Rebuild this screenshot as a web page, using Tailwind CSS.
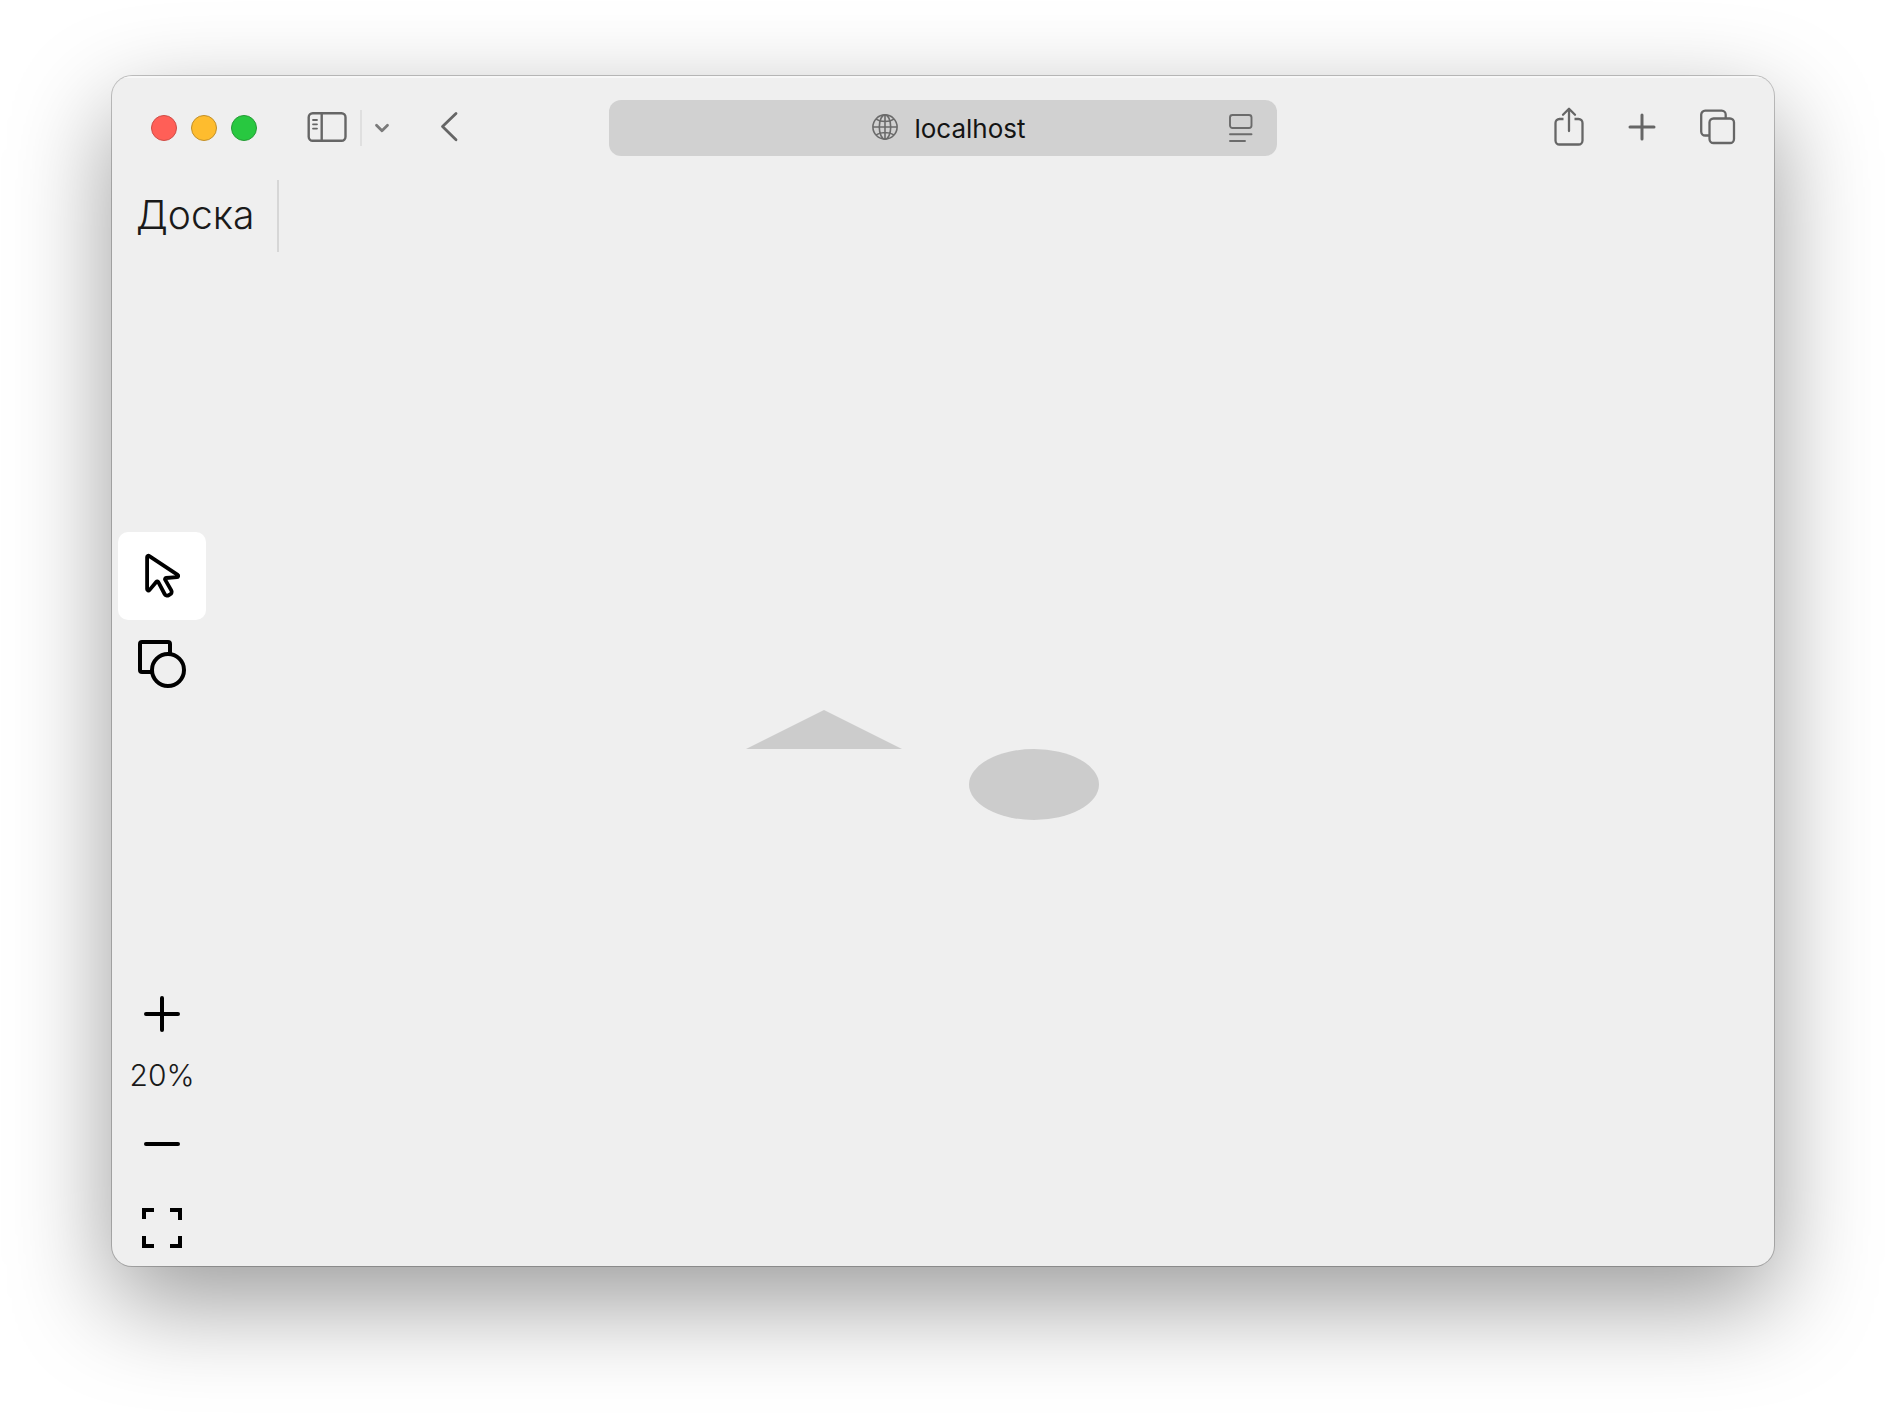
<!DOCTYPE html>
<html lang="ru">
<head>
<meta charset="utf-8">
<title>Доска</title>
<script src="https://cdn.jsdelivr.net/npm/@tailwindcss/browser@4"></script>
</head>
<body class="flex min-h-screen flex-col bg-white px-28 pt-19 pb-37 font-['Inter',sans-serif] text-[#1a1a1a]">
<div class="flex flex-1 flex-col overflow-hidden rounded-[20px] bg-[#efefef] shadow-[0_0_0_1px_rgba(0,0,0,0.22),0_36px_100px_rgba(0,0,0,0.4)]">

  <!-- Browser toolbar -->
  <header class="grid h-26 shrink-0 grid-cols-[1fr_668px_1fr] items-center border-t-2 border-[#f7f7f7] pb-[2px] text-[#666]">
    <div class="flex items-center pl-[39px]">
      <div class="flex gap-[14px]">
        <button aria-label="Закрыть" class="size-[26px] rounded-full border border-[#cf4b45] bg-[#ff5f57]"></button>
        <button aria-label="Свернуть" class="size-[26px] rounded-full border border-[#c28f27] bg-[#febc2e]"></button>
        <button aria-label="Развернуть" class="size-[26px] rounded-full border border-[#249a34] bg-[#28c840]"></button>
      </div>
      <button aria-label="Боковая панель" class="mb-[2px] ml-[50px]">
        <svg class="block" width="40" height="32" viewBox="0 0 40 32" fill="none" stroke="currentColor" stroke-width="2.4" stroke-linecap="round"><rect x="1.7" y="2.2" width="36.8" height="27.6" rx="4"/><path d="M14.7 2.2v27.6"/><path d="M6 9h4M6 13.3h4M6 17.6h4" stroke-width="1.8"/></svg>
      </button>
      <span class="ml-[13px] h-9 w-[2px] bg-[#dfdfdf]"></span>
      <button aria-label="Группы вкладок" class="ml-3">
        <svg class="block" width="16" height="12" viewBox="0 0 16 12" fill="none" stroke="#7b7b7b" stroke-width="2.8" stroke-linecap="round" stroke-linejoin="round"><path d="M2.5 3.2 8 8.8l5.500-5.600"/></svg>
      </button>
      <button aria-label="Назад" class="mb-[2px] ml-[50px]">
        <svg class="block" width="18" height="32" viewBox="0 0 18 32" fill="none" stroke="currentColor" stroke-width="2.8" stroke-linecap="round" stroke-linejoin="round"><path d="M16 2.500 2.500 15.600 16 28.700"/></svg>
      </button>
    </div>

    <div class="relative flex h-14 items-center justify-center rounded-xl bg-[#d1d1d1]">
      <a href="#" class="flex items-center gap-4 pl-3">
        <svg class="mb-[2px] block" width="26" height="26" viewBox="0 0 26 26" fill="none" stroke="#6b6b6b" stroke-width="1.6"><circle cx="13" cy="13" r="12.100"/><ellipse cx="13" cy="13" rx="5.700" ry="12.100"/><path d="M13 1v24M1 13h24M4 5.100c5 3.200 13 3.200 18 0M4 20.900c5-3.200 13-3.200 18 0"/></svg>
        <span class="pt-[2px] text-[26px] leading-8 text-[#141414]">localhost</span>
      </a>
      <button aria-label="Режим чтения" class="absolute right-6">
        <svg class="block" width="24" height="30" viewBox="0 0 24 30" fill="none" stroke="#6b6b6b" stroke-width="1.900" stroke-linecap="round"><rect x="1" y="2" width="21.500" height="13" rx="2.500"/><path d="M1 21.300h21.500M1 28h15"/></svg>
      </button>
    </div>

    <div class="flex items-center justify-end pr-[38px]">
      <button aria-label="Поделиться">
        <svg class="mb-1 block" width="30" height="40" viewBox="0 0 30 40" fill="none" stroke="currentColor" stroke-width="2.300" stroke-linecap="round" stroke-linejoin="round"><path d="M9.500 13H5.500a4 4 0 0 0-4 4v17.500a4 4 0 0 0 4 4h19a4 4 0 0 0 4-4V17a4 4 0 0 0-4-4h-4" stroke-linecap="butt"/><path d="M15 25V3M9 8.700l6-6 6 6"/></svg>
      </button>
      <button aria-label="Новая вкладка" class="ml-11">
        <svg class="mb-[3px] block" width="28" height="28" viewBox="0 0 28 28" stroke="currentColor" stroke-width="3" stroke-linecap="round"><path d="M14 2v24M2 14h24"/></svg>
      </button>
      <button aria-label="Обзор вкладок" class="ml-11">
        <svg class="mb-[3px] block" width="36" height="36" viewBox="0 0 36 36" fill="none" stroke="currentColor" stroke-width="2.300"><rect x="9.500" y="9.500" width="24.500" height="24.500" rx="4"/><path d="M9.500 26.500H5.200a4 4 0 0 1-4-4V5.700a4 4 0 0 1 4-4h16.500a4 4 0 0 1 4 4v3.800"/></svg>
      </button>
    </div>
  </header>

  <!-- Board title -->
  <div class="flex h-18 shrink-0">
    <h1 class="flex w-[167px] items-center border-r-2 border-[#d6d6d6] pb-1 pl-6 text-[39px] leading-none font-light">Доска</h1>
  </div>

  <div class="flex flex-1">
    <!-- Tools -->
    <nav aria-label="Инструменты" class="flex w-[100px] flex-col items-center pt-70 text-black">
      <button aria-label="Выбор" class="grid size-22 place-items-center rounded-[10px] bg-white">
        <svg class="block" width="48" height="48" viewBox="0 0 48 48" fill="none" stroke="currentColor" stroke-width="3.800" stroke-linecap="round" stroke-linejoin="round"><path d="M9.100 4.900v32.400a1.300 1.300 0 0 0 2.300.8l7-8.400a1.100 1.100 0 0 1 1.800.2l6.400 12.100a3 3 0 0 0 4 1.200l1.500-.8a3 3 0 0 0 1.200-4.100l-6.200-10.700a1.100 1.100 0 0 1 .9-1.600l11.100-.9a1.200 1.200 0 0 0 .6-2.200L11 3.900a1.200 1.200 0 0 0-1.900 1z"/></svg>
      </button>
      <button aria-label="Фигуры" class="grid size-22 place-items-center">
        <svg class="block" width="48" height="48" viewBox="0 0 48 48" fill="none" stroke="currentColor" stroke-width="4"><path d="M32 13V4a2 2 0 0 0-2-2H4a2 2 0 0 0-2 2v26a2 2 0 0 0 2 2h9"/><circle cx="30" cy="30" r="16"/></svg>
      </button>
      <button aria-label="Увеличить" class="mt-auto grid size-22 place-items-center">
        <svg class="block" width="36" height="36" viewBox="0 0 36 36" stroke="currentColor" stroke-width="4" stroke-linecap="round"><path d="M18 2v32M2 18h32"/></svg>
      </button>
      <output class="h-[42px] text-[30px] leading-[34px] font-light text-[#1a1a1a]">20%</output>
      <button aria-label="Уменьшить" class="grid size-22 place-items-center">
        <svg class="block" width="36" height="36" viewBox="0 0 36 36" stroke="currentColor" stroke-width="4" stroke-linecap="round"><path d="M2 18h32"/></svg>
      </button>
      <button aria-label="На весь экран" class="px-6 pt-5 pb-[18px]">
        <svg class="block" width="40" height="40" viewBox="0 0 40 40" fill="none" stroke="currentColor" stroke-width="4"><path d="M2 11V2h10M28 2h10v10M38 28v10H28M12 38H2V28"/></svg>
      </button>
    </nav>

    <!-- Canvas with free-placed shapes -->
    <main class="relative flex-1 text-[#ccc]">
      <svg class="absolute top-[458px] left-[534px]" width="156" height="39" viewBox="0 0 156 39" fill="currentColor"><path d="M78 0l78 39H0z"/></svg>
      <svg class="absolute top-[497px] left-[757px]" width="130" height="71" viewBox="0 0 130 71" fill="currentColor"><ellipse cx="65" cy="35.500" rx="65" ry="35.500"/></svg>
    </main>
  </div>
</div>
</body>
</html>
